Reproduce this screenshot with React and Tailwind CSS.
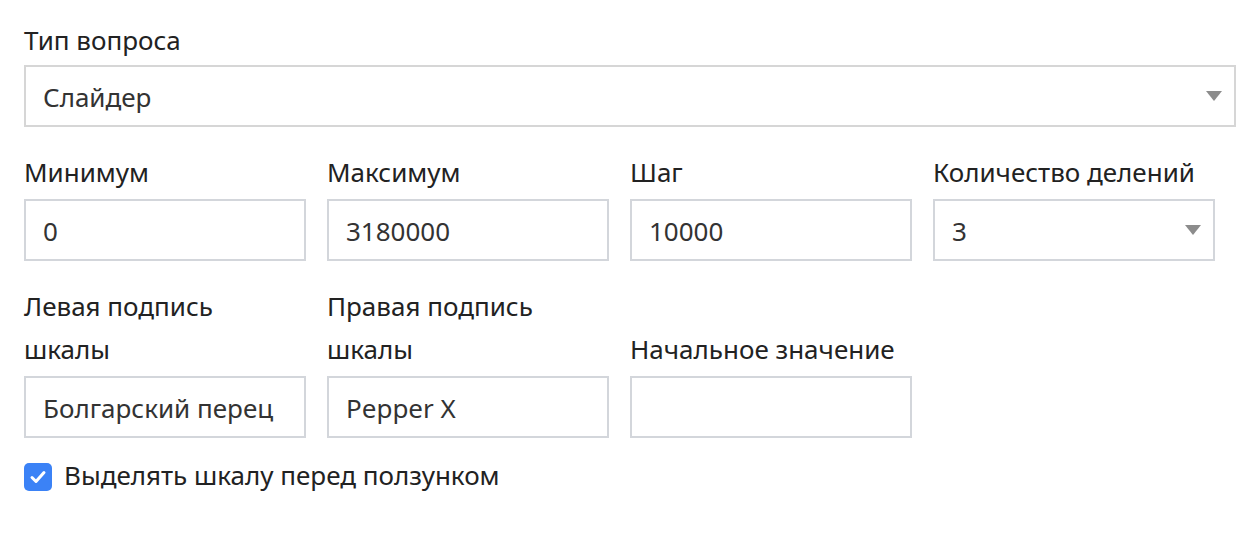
import React, { useState } from 'react';

const font = { fontFamily: '"Noto Sans", "Open Sans", sans-serif' };

const Arrow = () => (
    <svg width="16" height="10" viewBox="0 0 16 10" className="absolute right-[12px] top-1/2 -translate-y-1/2">
        <path d="M0 0 L16 0 L8 10 Z" fill="#8c8c8c" />
    </svg>
);

const Field = ({ label, value, select }) => (
    <div className="flex flex-col justify-end pr-[21px]">
        <label className="text-[26px] leading-[43px] text-[#222] mb-[5px]">{label}</label>
        <div className="relative h-[62px] border-2 border-[#d3d6db] bg-white flex items-center px-[17px] pt-[3px] text-[26px] text-[#333]">
            {value}
            {select && <Arrow />}
        </div>
    </div>
);

export default function App() {
    const [checked, setChecked] = useState(true);

    return (
        <div className="bg-white w-[1260px] h-[534px] px-[24px] pt-[19px]" style={font}>
            {/* Тип вопроса */}
            <div className="flex flex-col">
                <label className="text-[26px] leading-[43px] text-[#222] mb-[3px]">Тип вопроса</label>
                <div className="relative h-[62px] border-2 border-[#d6d6d6] bg-white flex items-center px-[17px] pt-[3px] text-[26px] text-[#333]">
                    Слайдер
                    <Arrow />
                </div>
            </div>

            <div className="grid grid-cols-4 mt-[24px]">
                <Field label="Минимум" value="0" />
                <Field label="Максимум" value="3180000" />
                <Field label="Шаг" value="10000" />
                <Field label="Количество делений" value="3" select />
            </div>

            <div className="grid grid-cols-4 mt-[24px]">
                <Field label={<>Левая подпись<br />шкалы</>} value="Болгарский перец" />
                <Field label={<>Правая подпись<br />шкалы</>} value="Pepper X" />
                <Field label="Начальное значение" value="" />
            </div>

            <label className="flex items-center gap-[12px] mt-[25px] h-[28px] cursor-pointer" onClick={() => setChecked(!checked)}>
                <span className={`w-[28px] h-[28px] rounded-[5px] flex items-center justify-center ${checked ? 'bg-[#3b82f6]' : 'border-2 border-[#d3d6db]'}`}>
                    {checked && (
                        <svg width="18" height="18" viewBox="0 0 18 18">
                            <path d="M3 9.5 L7 13.5 L15 4.5" fill="none" stroke="white" strokeWidth="3" strokeLinecap="round" strokeLinejoin="round" />
                        </svg>
                    )}
                </span>
                <span className="text-[26px] leading-[28px] pb-[5px] text-[#222]">Выделять шкалу перед ползунком</span>
            </label>
        </div>
    );
}
